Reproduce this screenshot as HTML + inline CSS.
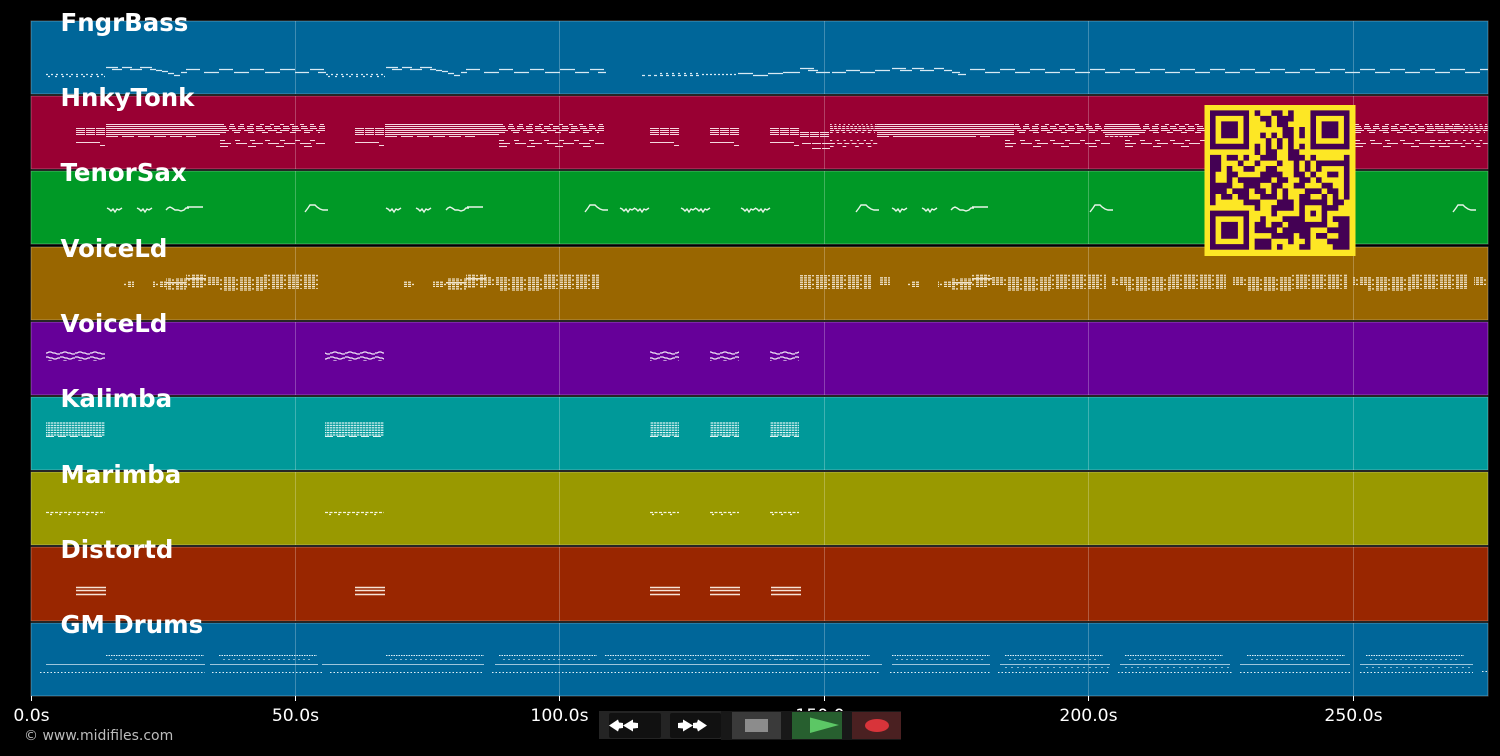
<!DOCTYPE html>
<html lang="en">
<head>
<meta charset="utf-8">
<title>MIDI piano roll</title>
<style>
html,body{margin:0;padding:0;background:#000;width:1500px;height:756px;overflow:hidden}
svg{display:block;position:absolute;left:0;top:0}
.l{font:bold 24.45px "DejaVu Sans",sans-serif;fill:#fff}
.t{font:17.2px "DejaVu Sans",sans-serif;fill:#fff;text-anchor:middle}
</style>
</head>
<body>
<svg width="1500" height="756" viewBox="0 0 1500 756" xmlns="http://www.w3.org/2000/svg">
<defs>
<pattern id="pc" width="16" height="4.4" patternUnits="userSpaceOnUse">
<path fill="#f0e4cc" d="M0 0h3v1.300H0zM4 0h3v1.300H4zM8 0h3v1.300H8zM0 2.200h3v1.300H0zM4 2.200h3v1.300H4zM8 2.200h3v1.300H8zM12 2.200h2v1.300h-2z"/>
</pattern>
<pattern id="pk" width="3" height="2.4" patternUnits="userSpaceOnUse"><rect width="2.4" height="1.2" fill="#e4f6f6"/></pattern>
<pattern id="pv" width="15" height="9" patternUnits="userSpaceOnUse">
<path fill="none" stroke="#f4ecf8" stroke-width="1.200" d="M0 2h2l2-1h2l2 1h2l2 1h3M0 6h3l2 1h2l2 1h2l2-1h2"/>
</pattern>
<g id="t1a" fill="none" stroke="#d8eaf4" stroke-width="1.300">
<path d="M46 74.500h60" stroke-dasharray="2 3"/>
<path d="M48 76.500h57" stroke-dasharray="2 5"/>
<path d="M106 67.500h12M112 69.500h10M122 67.500h10M130 69.500h12M140 67.500h12M150 69.500h6M156 70.500h6M162 71.500h6M168 73.500h6M174 75.500h6"/>
<path d="M181 72.500h6M186 69.500h14M204 72.500h15M219 69.500h14M234 72.500h15M250 69.500h14M265 72.500h15M280 69.500h15M295 72.500h14M310 69.500h14M318 72.500h8"/>
</g>
<g id="t2b" fill="none" stroke="#f6d8e0" stroke-width="1.100">
<path d="M0 124.500h114M0 126.500h114M0 128.500h114M0 130.500h114M0 132.500h114M0 134.500h114"/>
<path d="M0 136.500h90" stroke-dasharray="12 4"/>
</g>
<g id="t2s" fill="none" stroke="#f6d8e0" stroke-width="1.100">
<path d="M0 124.500h105" stroke-dasharray="4 6"/>
<path d="M0 126.500h105" stroke-dasharray="6 3"/>
<path d="M0 128.500h105" stroke-dasharray="7 2"/>
<path d="M0 130.500h105" stroke-dasharray="9 3"/>
<path d="M0 132.500h100" stroke-dasharray="6 8"/>
<path d="M0 140.500h100" stroke-dasharray="5 10"/>
<path d="M0 143.500h105" stroke-dasharray="11 5"/>
<path d="M0 146.500h100" stroke-dasharray="8 20"/>
</g>
<g id="t2l" fill="none" stroke="#f6d8e0" stroke-width="1.100">
<path d="M0 128.500h30M0 130.500h30M0 132.500h30M0 134.500h30" stroke-dasharray="9 1"/>
<path d="M0 142.500h24M24 145.500h5"/>
</g>
<path id="w1" fill="none" stroke="#e8f4e8" stroke-width="1.400" d="M0 208l2 1 2 2 2-2 2 3 2-3 2 1 3-2"/>
<path id="w2" fill="none" stroke="#e8f4e8" stroke-width="1.400" d="M0 210l2-2 2-1 2 1 3 2h3l3 1 3-1 2-2h3M21 207h16"/>
<path id="w3" fill="none" stroke="#e8f4e8" stroke-width="1.400" d="M0 212l3-4 2-3h5l2 2 3 2 3 1h5"/>
<path id="t8" fill="none" stroke="#f6e4d8" stroke-width="1.500" d="M0 587.500h30M0 590.500h30M0 594.500h30"/>
<g id="d" fill="none" stroke="#e0f0f8" stroke-width="1.100">
<path d="M0 655.500h98" stroke-dasharray="1.500 1"/>
<path d="M4 659.500h90" stroke-dasharray="2 3" stroke-opacity=".6"/>
</g>
</defs>

<!-- tracks -->
<g stroke="#fff" stroke-opacity=".3" stroke-width="1">
<rect x="31" y="21" width="1457" height="73" fill="#006699"/>
<rect x="31" y="96" width="1457" height="73" fill="#990033"/>
<rect x="31" y="171" width="1457" height="73" fill="#009926"/>
<rect x="31" y="247" width="1457" height="73" fill="#996600"/>
<rect x="31" y="322" width="1457" height="73" fill="#660099"/>
<rect x="31" y="397" width="1457" height="73" fill="#009999"/>
<rect x="31" y="472" width="1457" height="73" fill="#999900"/>
<rect x="31" y="547" width="1457" height="74" fill="#992600"/>
<rect x="31" y="623" width="1457" height="73" fill="#006699"/>
</g>

<!-- grid -->
<g stroke="#fff" stroke-opacity=".25" stroke-width="1">
<path d="M295.500 21V94M295.500 96V169M295.500 171V244M295.500 247V320M295.500 322V395M295.500 397V470M295.500 472V545M295.500 547V621M295.500 623V696"/>
<path d="M559.500 21V94M559.500 96V169M559.500 171V244M559.500 247V320M559.500 322V395M559.500 397V470M559.500 472V545M559.500 547V621M559.500 623V696"/>
<path d="M824.500 21V94M824.500 96V169M824.500 171V244M824.500 247V320M824.500 322V395M824.500 397V470M824.500 472V545M824.500 547V621M824.500 623V696"/>
<path d="M1088.500 21V94M1088.500 96V169M1088.500 171V244M1088.500 247V320M1088.500 322V395M1088.500 397V470M1088.500 472V545M1088.500 547V621M1088.500 623V696"/>
<path d="M1353.500 21V94M1353.500 96V169M1353.500 171V244M1353.500 247V320M1353.500 322V395M1353.500 397V470M1353.500 472V545M1353.500 547V621M1353.500 623V696"/>
</g>

<!-- track 1 notes -->
<use href="#t1a"/>
<use href="#t1a" transform="translate(280 0)"/>
<g fill="none" stroke="#d8eaf4" stroke-width="1.300">
<path d="M642 75.500h58" stroke-dasharray="3 3"/>
<path d="M660 73.500h40" stroke-dasharray="2 4"/>
<path d="M702 74.500h34" stroke-dasharray="2 2"/>
<path d="M738 73.500h15M768 73.500h15M753 75.500h15M783 72.500h17"/>
<path d="M800 68.500h14M808 70.500h10M816 72.500h14M832 72.500h14M846 70.500h14M860 72.500h15M875 70.500h15"/>
<path d="M892 68.500h14M900 70.500h12M912 68.500h12M920 70.500h14M934 68.500h10M944 70.500h8M952 72.500h8M958 74.500h8"/>
<path d="M970 69.500H1488" stroke-dasharray="15 15"/>
<path d="M985 72.500H1488" stroke-dasharray="15 15"/>
</g>

<!-- track 2 notes -->
<use href="#t2l" transform="translate(76 0)"/>
<use href="#t2b" transform="translate(106 0)"/>
<use href="#t2s" transform="translate(220 0)"/>
<use href="#t2l" transform="translate(355 0)"/>
<use href="#t2b" transform="translate(385 0)"/>
<use href="#t2s" transform="translate(499 0)"/>
<use href="#t2l" transform="translate(650 0)"/>
<use href="#t2l" transform="translate(710 0)"/>
<use href="#t2l" transform="translate(770 0)"/>
<g fill="none" stroke="#f6d8e0" stroke-width="1.100">
<path d="M800 132.500h30M800 134.500h30M800 136.500h30M802 143.500h28M812 148.500h18" stroke-dasharray="9 1"/>
</g>
<use href="#t2s" transform="translate(830 0) scale(.45 1)"/>
<use href="#t2b" transform="translate(877 0)"/>
<use href="#t2b" transform="translate(900 0)"/>
<use href="#t2s" transform="translate(1005 0)"/>
<use href="#t2b" transform="translate(1105 0) scale(.3 1)"/>
<use href="#t2s" transform="translate(1125 0)"/>
<use href="#t2s" transform="translate(1355 0)"/>
<use href="#t2s" transform="translate(1430 0) scale(.55 1)"/>

<!-- track 3 notes -->
<use href="#w1" x="107"/><use href="#w1" x="137"/><use href="#w2" x="166"/><use href="#w3" x="305"/>
<use href="#w1" x="386"/><use href="#w1" x="416"/><use href="#w2" x="446"/><use href="#w3" x="585"/>
<use href="#w1" x="620"/><use href="#w1" x="634"/><use href="#w1" x="681"/><use href="#w1" x="695"/>
<use href="#w1" x="741"/><use href="#w1" x="755"/><use href="#w3" x="856"/>
<use href="#w1" x="892"/><use href="#w1" x="922"/><use href="#w2" x="951"/><use href="#w3" x="1090"/><use href="#w3" x="1453"/>

<!-- track 4 notes -->
<g fill="url(#pc)">
<rect x="123" y="281" width="11" height="6"/><rect x="153" y="281" width="13" height="6"/>
<rect x="166" y="278" width="20" height="12"/><rect x="186" y="274" width="20" height="14"/>
<rect x="206" y="277" width="14" height="8"/><rect x="220" y="277" width="44" height="14"/><rect x="264" y="274" width="56" height="15"/>
<rect x="403" y="281" width="11" height="6"/><rect x="433" y="281" width="13" height="6"/>
<rect x="446" y="278" width="20" height="12"/><rect x="466" y="274" width="20" height="14"/>
<rect x="486" y="277" width="14" height="8"/><rect x="500" y="277" width="44" height="14"/><rect x="544" y="274" width="55" height="15"/>
<rect x="800" y="275" width="71" height="14"/><rect x="878" y="277" width="12" height="8"/>
<rect x="908" y="281" width="12" height="6"/><rect x="938" y="281" width="14" height="6"/>
<rect x="952" y="278" width="20" height="12"/><rect x="972" y="274" width="20" height="13"/>
<rect x="992" y="277" width="14" height="8"/><rect x="1006" y="277" width="44" height="14"/><rect x="1050" y="274" width="56" height="15"/>
<rect x="1112" y="277" width="14" height="8"/><rect x="1126" y="277" width="44" height="14"/><rect x="1170" y="274" width="56" height="15"/>
<rect x="1233" y="277" width="14" height="8"/><rect x="1247" y="277" width="44" height="14"/><rect x="1291" y="274" width="56" height="15"/>
<rect x="1353" y="277" width="14" height="8"/><rect x="1367" y="277" width="44" height="14"/><rect x="1411" y="274" width="57" height="15"/>
<rect x="1474" y="277" width="14" height="8"/>
</g>
<path fill="#f0e4cc" d="M166 282h20v1.500h-20zM186 278h20v1.500h-20zM446 282h20v1.500h-20zM466 278h20v1.500h-20zM952 282h20v1.500h-20zM972 278h20v1.500h-20z"/>

<!-- track 5 notes -->
<g fill="url(#pv)">
<rect x="46" y="351" width="59" height="10"/><rect x="325" y="351" width="59" height="10"/>
<rect x="650" y="351" width="29" height="10"/><rect x="710" y="351" width="29" height="10"/><rect x="770" y="351" width="29" height="10"/>
</g>

<!-- track 6 notes -->
<g fill="url(#pk)">
<rect x="46" y="422" width="59" height="14"/><rect x="325" y="422" width="59" height="14"/>
<rect x="650" y="422" width="29" height="14"/><rect x="710" y="422" width="29" height="14"/><rect x="770" y="422" width="29" height="14"/>
</g>
<g fill="none" stroke="#e4f6f6" stroke-width="1">
<path d="M46 436.500h59M325 436.500h59M650 436.500h29M710 436.500h29M770 436.500h29" stroke-dasharray="8 4"/>
</g>

<!-- track 7 notes -->
<g fill="none" stroke="#f6f6e0" stroke-width="1.200">
<path d="M46 512.500h59M325 512.500h59M650 512.500h29M710 512.500h29M770 512.500h29" stroke-dasharray="3 1.500"/>
<path d="M50 514.500h50M329 514.500h50M652 514.500h25M712 514.500h25M772 514.500h25" stroke-dasharray="2 7"/>
</g>

<!-- track 8 notes -->
<use href="#t8" x="76"/><use href="#t8" x="355"/><use href="#t8" x="650"/><use href="#t8" x="710"/><use href="#t8" x="771"/>

<!-- track 9 notes -->
<use href="#d" x="106"/><use href="#d" x="219"/><use href="#d" x="386"/><use href="#d" x="499"/><use href="#d" x="605"/><use href="#d" x="700"/>
<use href="#d" x="772"/><use href="#d" x="892"/><use href="#d" x="1005"/><use href="#d" x="1125"/><use href="#d" x="1247"/><use href="#d" x="1366"/>
<g fill="none" stroke="#e0f0f8" stroke-width="1">
<path d="M46 664.500H205M210 664.500H318M322 664.500H484M495 664.500H882M892 664.500H990M1000 664.500H1110M1120 664.500H1230M1240 664.500H1350M1360 664.500H1473" stroke-opacity=".7"/>
<path d="M40 672.500H205M212 672.500H322M330 672.500H484M492 672.500H880M890 672.500H990M998 672.500H1110M1118 672.500H1232M1240 672.500H1352M1360 672.500H1473M1482 671.500h6" stroke-dasharray="1.500 2"/>
<path d="M1005 667.500h105M1125 667.500h105M1366 667.500h105" stroke-dasharray="2 4" stroke-opacity=".6"/>
</g>

<!-- labels -->
<text class="l" x="60.500" y="31">FngrBass</text>
<text class="l" x="60.500" y="106">HnkyTonk</text>
<text class="l" x="60.500" y="181">TenorSax</text>
<text class="l" x="60.500" y="257">VoiceLd</text>
<text class="l" x="60.500" y="332">VoiceLd</text>
<text class="l" x="60.500" y="407">Kalimba</text>
<text class="l" x="60.500" y="483">Marimba</text>
<text class="l" x="60.500" y="558">Distortd</text>
<text class="l" x="60.500" y="633">GM Drums</text>

<!-- ticks -->
<path d="M31.500 696v5M295.500 696v5M559.500 696v5M824.500 696v5M1088.500 696v5M1353.500 696v5" stroke="#fff" stroke-width="1"/>
<text class="t" x="31.500" y="721">0.0s</text>
<text class="t" x="295.500" y="721">50.0s</text>
<text class="t" x="559.500" y="721">100.0s</text>
<text class="t" x="824.500" y="721">150.0s</text>
<text class="t" x="1088.500" y="721">200.0s</text>
<text class="t" x="1353.500" y="721">250.0s</text>
<text x="24" y="740" style="font:14px 'DejaVu Sans',sans-serif;fill:#bcbcbc">© www.midifiles.com</text>

<!-- QR -->
<rect x="1204.500" y="105" width="151" height="151" fill="#fde725"/>
<svg x="1210" y="110.300" width="139.500" height="139.500" viewBox="0 0 25 25">
<path fill="none" stroke="#440154" stroke-width="1.020" d="
M0 .5h7M8 .5h1M11 .5h2M14 .5h1M18 .5h7
M0 1.500h1M6 1.500h1M9 1.500h2M12 1.500h3M18 1.500h1M24 1.500h1
M0 2.500h1M2 2.500h3M6 2.500h1M10 2.500h1M12 2.500h2M18 2.500h1M20 2.500h3M24 2.500h1
M0 3.500h1M2 3.500h3M6 3.500h1M13 3.500h2M16 3.500h1M18 3.500h1M20 3.500h3M24 3.500h1
M0 4.500h1M2 4.500h3M6 4.500h1M9 4.500h1M11 4.500h1M13 4.500h2M16 4.500h1M18 4.500h1M20 4.500h3M24 4.500h1
M0 5.500h1M6 5.500h1M10 5.500h1M12 5.500h1M14 5.500h1M18 5.500h1M24 5.500h1
M0 6.500h7M8 6.500h1M10 6.500h1M12 6.500h1M14 6.500h1M16 6.500h1M18 6.500h7
M8 7.500h1M10 7.500h2M14 7.500h2
M0 8.500h2M3 8.500h2M6 8.500h1M9 8.500h3M14 8.500h3M18 8.500h1M24 8.500h1
M0 9.500h2M5 9.500h1M8 9.500h1M12 9.500h1M15 9.500h1M17 9.500h1M19 9.500h6
M0 10.500h2M3 10.500h1M6 10.500h2M10 10.500h2M15 10.500h1M17 10.500h1M19 10.500h1M24 10.500h1
M0 11.500h1M3 11.500h2M9 11.500h4M15 11.500h2M18 11.500h1M21 11.500h2M24 11.500h1
M0 12.500h1M3 12.500h1M5 12.500h6M12 12.500h2M16 12.500h2M19 12.500h1M24 12.500h1
M0 13.500h4M6 13.500h3M11 13.500h2M15 13.500h2M20 13.500h2M24 13.500h1
M0 14.500h3M4 14.500h3M8 14.500h2M11 14.500h1M13 14.500h1M17 14.500h3M21 14.500h2M24 14.500h1
M0 15.500h1M2 15.500h2M5 15.500h2M9 15.500h3M13 15.500h1M16 15.500h2M20 15.500h1M22 15.500h1M24 15.500h1
M0 16.500h1M6 16.500h3M12 16.500h3M16 16.500h5M22 16.500h2
M8 17.500h1M11 17.500h4M16 17.500h1M20 17.500h3
M0 18.500h7M11 18.500h1M16 18.500h1M18 18.500h1M20 18.500h1
M0 19.500h1M6 19.500h1M9 19.500h1M13 19.500h4M20 19.500h1M22 19.500h3
M0 20.500h1M2 20.500h3M6 20.500h1M8 20.500h2M11 20.500h2M14 20.500h7M23 20.500h2
M0 21.500h1M2 21.500h3M6 21.500h1M8 21.500h4M13 21.500h5M21 21.500h4
M0 22.500h1M2 22.500h3M6 22.500h1M11 22.500h4M16 22.500h2M19 22.500h2M23 22.500h2
M0 23.500h1M6 23.500h1M8 23.500h3M14 23.500h1M17 23.500h1M21 23.500h4
M0 24.500h7M8 24.500h3M12 24.500h1M16 24.500h2M22 24.500h3"/>
</svg>

<!-- controls -->
<rect x="599" y="711" width="302" height="28" fill="#242424"/>
<rect x="721" y="711" width="180" height="29" fill="#181818"/>
<rect x="609" y="713" width="52" height="25" rx="2" fill="#111"/>
<rect x="670" y="713" width="51" height="25" rx="2" fill="#111"/>
<rect x="732" y="712" width="49" height="27" fill="#3a3a3a"/>
<rect x="792" y="712" width="50" height="27" fill="#275f2f"/>
<rect x="852" y="712" width="49" height="27" fill="#4a2021"/>
<path fill="#fff" d="M609 725.500l9-6 1 3 4 .5v5l-4 .5-1 3zM623 725.500l10-6v3l5 .5v5l-5 .5v3z"/>
<path fill="#fff" d="M707 725.500l-9-6-1 3-4 .5v5l4 .5 1 3zM693 725.500l-10-6v3l-5 .5v5l5 .5v3z"/>
<rect x="745" y="719" width="23" height="13" fill="#8c8c8c"/>
<path fill="#5cc765" d="M810 717.500L839 725 810 733z"/>
<ellipse cx="877" cy="725.500" rx="12" ry="6.500" fill="#d8343a"/>
</svg>
</body>
</html>
